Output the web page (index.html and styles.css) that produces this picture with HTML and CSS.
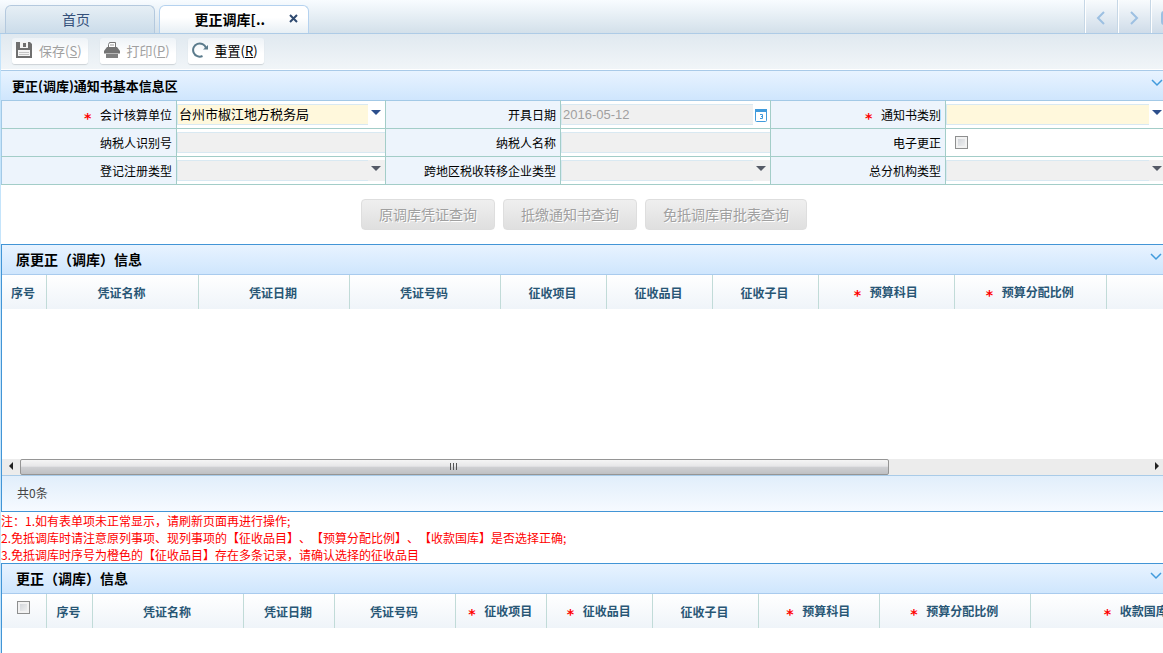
FILE: index.html
```html
<!DOCTYPE html>
<html lang="zh-CN">
<head>
<meta charset="utf-8">
<title>更正调库</title>
<link rel="stylesheet" href="styles.css">
</head>
<body>
<header class="tabbar">
  <nav class="tabs">
    <button class="tab" type="button">首页</button>
    <div class="tab tab-active">
      <span>更正调库[..</span>
      <button class="tab-close" type="button" aria-label="关闭">
        <svg width="9" height="9" viewBox="0 0 9 9"><path d="M1 1l7 7M8 1l-7 7" fill="none" stroke="#2f4a70" stroke-width="2"/></svg>
      </button>
    </div>
  </nav>
  <div class="tab-nav">
    <button type="button" aria-label="向左"><svg width="10" height="14" viewBox="0 0 10 14"><path d="M8 1L2 7l6 6" fill="none" stroke="#9dc0e2" stroke-width="2"/></svg></button>
    <button type="button" aria-label="向右"><svg width="10" height="14" viewBox="0 0 10 14"><path d="M2 1l6 6-6 6" fill="none" stroke="#9dc0e2" stroke-width="2"/></svg></button>
    <button type="button" aria-label="窗口"><svg width="14" height="14" viewBox="0 0 14 14"><rect x="1" y="1" width="12" height="12" rx="2" fill="#eef5fb" stroke="#9dc0e2" stroke-width="2"/><path d="M1 4h12" stroke="#9dc0e2" stroke-width="2"/></svg></button>
  </div>
</header>
<main class="page">
  <div class="toolbar">
    <button class="tool" type="button" disabled>
      <svg width="16" height="16" viewBox="0 0 16 16"><path d="M0 0h14l2 2v14H0z" fill="#6f6f6f"/><path d="M4 0h8v6H4z" fill="#f4f4f4"/><path d="M7 1h3v4H7z" fill="#6f6f6f"/><path d="M2 8h12v6H2z" fill="#f4f4f4"/><path d="M3 10.500h10M3 12.500h10" stroke="#c4c4c4"/></svg>
      <span>保存(<u>S</u>)</span>
    </button>
    <button class="tool" type="button" disabled>
      <svg width="16" height="16" viewBox="0 0 16 16"><path d="M4.500 5V2.500l1-2h6V5" fill="#fff" stroke="#777"/><path d="M6 3h4" stroke="#999"/><path d="M3 5h10l3 4v2H0V9z" fill="#747474"/><path d="M2 12h12v4H2z" fill="#808080"/><path d="M0 11.500h16" stroke="#b8b8b8"/></svg>
      <span>打印(<u>P</u>)</span>
    </button>
    <button class="tool" type="button">
      <svg width="16" height="16" viewBox="0 0 16 16"><path d="M10.500 14A6.600 6.600 0 1 1 14 6" fill="none" stroke="#5b7b8c" stroke-width="2"/><path d="M11 7.500h5V3z" fill="#5b7b8c"/></svg>
      <span>重置(<u>R</u>)</span>
    </button>
  </div>

  <section class="basic">
    <div class="title title-basic">
      <h2>更正(调库)通知书基本信息区</h2>
      <button class="fold" type="button" aria-label="折叠"><svg width="12" height="8" viewBox="0 0 12 8"><path d="M1 1l5 5 5-5" fill="none" stroke="#419bdc" stroke-width="1.500"/></svg></button>
    </div>
    <table class="form">
      <colgroup><col class="c-label"><col class="c-first"><col class="c-label"><col class="c-field"><col class="c-label"><col></colgroup>
      <tr>
        <th><i class="req">*</i><label for="unit">会计核算单位</label></th>
        <td><div class="combo need"><select id="unit"><option>台州市椒江地方税务局</option></select><svg class="arrow" viewBox="0 0 17 21"><path d="M3 6h10l-5 5z"/></svg></div></td>
        <th><label for="date">开具日期</label></th>
        <td><div class="combo date"><input id="date" type="text" value="2016-05-12" disabled><svg class="arrow" viewBox="0 0 17 21"><rect x="2.500" y="5.500" width="11" height="12" rx="1" fill="#fff" stroke="#419bdc"/><path d="M2 6.500h12" stroke="#419bdc" stroke-width="3"/><path d="M4 4.500h9" stroke="#fff" stroke-dasharray="1 1"/><path d="M7 10.500h2.500v4H7M8 12.500h2" fill="none" stroke="#419bdc"/></svg></div></td>
        <th><i class="req">*</i><label for="kind">通知书类别</label></th>
        <td><div class="combo need"><select id="kind"><option></option></select><svg class="arrow" viewBox="0 0 17 21"><path d="M3 6h10l-5 5z"/></svg></div></td>
      </tr>
      <tr>
        <th><label for="taxno">纳税人识别号</label></th>
        <td><div class="combo"><input id="taxno" type="text" disabled></div></td>
        <th><label for="taxname">纳税人名称</label></th>
        <td><div class="combo"><input id="taxname" type="text" disabled></div></td>
        <th><label for="efix">电子更正</label></th>
        <td><input class="check check-form" id="efix" type="checkbox"></td>
      </tr>
      <tr>
        <th><label for="regtype">登记注册类型</label></th>
        <td><div class="combo off"><select id="regtype" disabled><option></option></select><svg class="arrow" viewBox="0 0 17 21"><path d="M3 6h10l-5 5z"/></svg></div></td>
        <th><label for="cross">跨地区税收转移企业类型</label></th>
        <td><div class="combo off"><select id="cross" disabled><option></option></select><svg class="arrow" viewBox="0 0 17 21"><path d="M3 6h10l-5 5z"/></svg></div></td>
        <th><label for="org">总分机构类型</label></th>
        <td><div class="combo off"><select id="org" disabled><option></option></select><svg class="arrow" viewBox="0 0 17 21"><path d="M3 6h10l-5 5z"/></svg></div></td>
      </tr>
    </table>
  </section>

  <div class="queries">
    <button type="button" disabled>原调库凭证查询</button>
    <button type="button" disabled>抵缴通知书查询</button>
    <button type="button" disabled>免抵调库审批表查询</button>
  </div>

  <section class="panel">
    <div class="title">
      <h2>原更正（调库）信息</h2>
      <button class="fold" type="button" aria-label="折叠"><svg width="12" height="8" viewBox="0 0 12 8"><path d="M1 1l5 5 5-5" fill="none" stroke="#419bdc" stroke-width="1.500"/></svg></button>
    </div>
    <div class="grid grid-origin">
      <table>
        <colgroup><col class="w45"><col class="w152"><col class="w151"><col class="w151"><col class="w106"><col class="w106"><col class="w106"><col class="w136"><col class="w152"><col class="w212"></colgroup>
        <thead><tr>
          <th>序号</th><th>凭证名称</th><th>凭证日期</th><th>凭证号码</th><th>征收项目</th><th>征收品目</th><th>征收子目</th>
          <th><i class="req">*</i>预算科目</th><th><i class="req">*</i>预算分配比例</th><th></th>
        </tr></thead>
      </table>
    </div>
    <div class="scroll">
      <button type="button" aria-label="向左滚动"><svg width="5" height="8" viewBox="0 0 5 8"><path d="M5 0v8L1 4z" fill="#222"/></svg></button>
      <div class="thumb"><i></i><i></i><i></i></div>
      <div class="track"></div>
      <button type="button" aria-label="向右滚动"><svg width="5" height="8" viewBox="0 0 5 8"><path d="M0 0v8l4-4z" fill="#222"/></svg></button>
    </div>
    <footer class="count">共0条</footer>
  </section>

  <div class="notes">
    <p>注：1.如有表单项未正常显示，请刷新页面再进行操作;</p>
    <p>2.免抵调库时请注意原列事项、现列事项的【征收品目】、【预算分配比例】、【收款国库】是否选择正确;</p>
    <p>3.免抵调库时序号为橙色的【征收品目】存在多条记录，请确认选择的征收品目</p>
  </div>

  <section class="panel panel-last">
    <div class="title">
      <h2>更正（调库）信息</h2>
      <button class="fold" type="button" aria-label="折叠"><svg width="12" height="8" viewBox="0 0 12 8"><path d="M1 1l5 5 5-5" fill="none" stroke="#419bdc" stroke-width="1.500"/></svg></button>
    </div>
    <div class="grid">
      <table>
        <colgroup><col class="w45"><col class="w46"><col class="w151"><col class="w91"><col class="w121"><col class="w91"><col class="w106"><col class="w106"><col class="w121"><col class="w151"><col class="w212"></colgroup>
        <thead><tr>
          <th class="pick"><input class="check" type="checkbox" aria-label="全选"></th><th>序号</th><th>凭证名称</th><th>凭证日期</th><th>凭证号码</th>
          <th><i class="req">*</i>征收项目</th><th><i class="req">*</i>征收品目</th><th>征收子目</th>
          <th><i class="req">*</i>预算科目</th><th><i class="req">*</i>预算分配比例</th><th><i class="req">*</i>收款国库</th>
        </tr></thead>
      </table>
    </div>
  </section>
</main>
</body>
</html>
```

FILE: styles.css
```css
* { box-sizing: border-box; }

body {
  margin: 0;
  min-height: 100vh;
  display: flex;
  flex-direction: column;
  overflow: hidden;
  background: #fff;
  color: #000;
  font: 12px/17px "Noto Sans CJK SC", sans-serif;
  text-spacing-trim: space-all;
}

button, input, select {
  margin: 0;
  padding: 0;
  border: 0;
  border-radius: 0;
  background: none;
  color: inherit;
  font: inherit;
}

svg { display: block; flex: none; }
h2, p { margin: 0; }

/* Tabs */
.tabbar {
  display: flex;
  justify-content: space-between;
  height: 34px;
  overflow: hidden;
  border-bottom: 1px solid #aecbe6;
  background: linear-gradient(#f8fcff, #d3e0ea);
}
.tabs {
  display: flex;
  gap: 4px;
  padding: 5px 0 0 5px;
}
.tab {
  display: flex;
  align-items: center;
  justify-content: center;
  width: 150px;
  padding-right: 8px;
  border: 1px solid #b4c9de;
  border-bottom: 0;
  border-radius: 6px 6px 0 0;
  background: linear-gradient(#e6eff5, #cbdcea);
  color: #34507a;
  font-size: 14px;
}
.tab-active {
  justify-content: flex-end;
  gap: 24px;
  height: 30px;
  padding-right: 10px;
  border-color: #b5d2ef;
  background: linear-gradient(#fff 40%, #e4edf3);
  color: #000;
  font-weight: bold;
}
.tab-active span { margin-bottom: 2px; }
.tab-close { padding: 0; margin-bottom: 4px; }
.tab-nav {
  display: flex;
  margin-right: -21px;
}
.tab-nav button {
  display: flex;
  align-items: center;
  justify-content: center;
  width: 33px;
  padding: 3px 2px 0 0;
  border-left: 1px solid #fff;
  box-shadow: -1px 0 #c6d7e6;
  background: linear-gradient(#f8fbfd, #cfdce9);
}
.tab-nav button:last-child { padding-right: 0; }

.page {
  flex: 1;
  display: flex;
  flex-direction: column;
  margin-right: -4px;
  border-left: 1px solid #c4e4fb;
}

/* Toolbar */
.toolbar {
  display: flex;
  gap: 12px;
  height: 36px;
  padding: 4px 11px 5px;
  border-bottom: 1px solid #fff;
  background: linear-gradient(#e0e9f0, #f1f5f8);
}
.tool {
  display: flex;
  align-items: center;
  gap: 7px;
  padding: 0 6px 2px 4px;
  border-radius: 3px;
  background: linear-gradient(#eef3f7, #fff 60%);
  box-shadow: 0 1px 1px #ccd2d6;
  font-size: 13px;
}
.tool:disabled { color: #a0a0a0; }

/* Section titles */
.title {
  display: flex;
  justify-content: space-between;
  align-items: center;
  height: 30px;
  padding: 0 5px 0 14px;
  border-bottom: 1px solid #a9cbee;
  background: linear-gradient(#e8f3ff, #cfe6fd);
}
.title h2 {
  padding-bottom: 2px;
  font-size: 14px;
  line-height: 20px;
}
.title-basic {
  padding: 0 4px 0 11px;
  border-top: 1px solid #a9cae8;
  border-bottom: 0;
}
.title-basic h2 { padding-bottom: 0; font-size: 13px; }
.fold { margin-bottom: 6px; }

/* Basic form */
.form {
  width: 100%;
  table-layout: fixed;
  border-collapse: collapse;
}
.form th, .form td {
  height: 28px;
  padding: 0;
  border: 1px solid #a3cdc8;
}
.form tr:first-child th, .form tr:first-child td { border-top-color: #a3c9e6; }
.form th:first-child { border-left-color: #a3c9e6; }
.form th {
  padding-right: 4px;
  background: #edf4fc;
  font-weight: normal;
  text-align: right;
  white-space: nowrap;
}
.c-label { width: 175px; }
.c-first { width: 209px; }
.c-field { width: 210px; }
.req {
  margin-right: 8px;
  color: #f00;
  font: bold 14px/12px "DejaVu Sans Mono", monospace;
  vertical-align: -3px;
}
.combo { display: flex; }
.combo input, .combo select {
  flex: 1;
  min-width: 0;
  height: 21px;
  padding-left: 2px;
  border: 1px solid #d9e9f2;
  border-width: 1px 0 1px 1px;
  background: #f0f0f0;
  appearance: none;
  font-size: 13px;
  line-height: 17px;
  opacity: 1;
}
.combo input { padding-left: 1px; color: #a0a0a0; font-family: "Liberation Sans", sans-serif; }
.combo .arrow { width: 17px; height: 21px; fill: #2d4f8c; }
.combo.need select { padding: 0 0 3px 1px; background: #fff8dc; }
.combo.off .arrow { background: #f0f0f0; fill: #555a66; }

.check {
  display: block;
  width: 13px;
  height: 13px;
  border: 1px solid #8e8f8f;
  appearance: none;
  background: linear-gradient(135deg, #cbcfd5, #f6f6f6);
  box-shadow: inset 0 0 0 2px #f2f2f2;
}
.check-form { margin-left: 9px; }

/* Query buttons */
.queries {
  display: flex;
  justify-content: center;
  gap: 8px;
  padding: 14px 0;
}
.queries button {
  height: 31px;
  padding: 0 17px;
  border: 1px solid #dedede;
  border-radius: 4px;
  background: linear-gradient(#efefef, #dfdfdf);
  color: #a0a0a0;
  font-size: 14px;
  text-shadow: 1px 1px #fff;
}

/* Data panels */
.panel {
  overflow: hidden;
  border: 1px solid #4295d6;
  border-right: 0;
}
.panel-last { flex: 1; border-bottom: 0; }
.grid table {
  table-layout: fixed;
  width: 0;
  border-collapse: separate;
  border-spacing: 0;
}
.grid-origin { height: 184px; }
.grid th {
  height: 34px;
  padding: 0 2px 0 0;
  border-right: 1px solid #c1dbd8;
  background: linear-gradient(#fff, #eff4f9);
  color: #285675;
  white-space: nowrap;
}
.grid .pick { padding: 7px 0 0 15px; vertical-align: top; }
.w45 { width: 45px; }
.w46 { width: 46px; }
.w91 { width: 91px; }
.w106 { width: 106px; }
.w121 { width: 121px; }
.w136 { width: 136px; }
.w151 { width: 151px; }
.w152 { width: 152px; }
.w212 { width: 212px; }

.scroll {
  display: flex;
  height: 16px;
  background: #ececec;
}
.scroll button {
  display: flex;
  align-items: center;
  justify-content: center;
  width: 18px;
  padding: 0 2px 2px 0;
}
.thumb {
  flex: 10;
  display: flex;
  align-items: center;
  justify-content: center;
  gap: 2px;
  padding: 0 2px 2px 0;
  border: 1px solid #959595;
  border-radius: 2px;
  background: linear-gradient(#f5f5f5, #e6e6e8 45%, #cfd0d3 50%, #bfc0c3);
}
.thumb i { width: 1px; height: 7px; background: #555; }
.track { flex: 3; }
.count {
  height: 36px;
  padding: 8px 15px;
  border-top: 1px solid #a9cbe8;
  background: linear-gradient(#e1eefb, #f6faff);
  color: #444;
}

.notes { color: #f00; }
```
